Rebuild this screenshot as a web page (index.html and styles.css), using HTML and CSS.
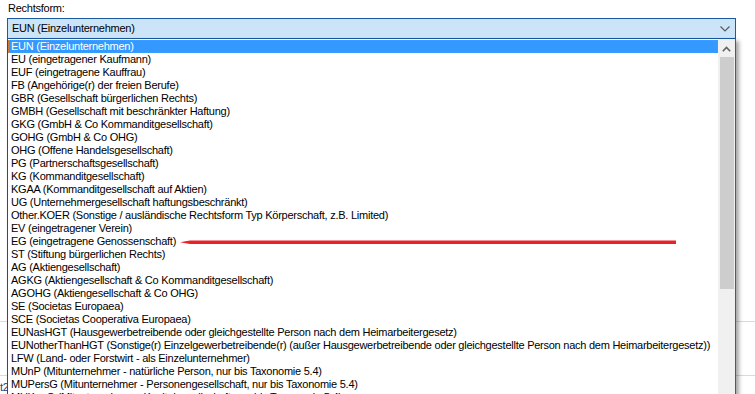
FILE: index.html
```html
<!DOCTYPE html>
<html lang="de">
<head>
<meta charset="utf-8">
<title>Rechtsform</title>
<link rel="stylesheet" href="styles.css">
</head>
<body>
<div class="page">
  <div class="field">
    <div class="lbl">Rechtsform:</div>
    <div class="select">
      <span class="sel-text">EUN (Einzelunternehmen)</span>
      <svg class="chev" width="10" height="6" viewBox="0 0 10 6"><polyline points="0.5,0.5 5,5 9.5,0.5" fill="none" stroke="#5a5a5a" stroke-width="1.2"/></svg>
    </div>
  </div>
  <div class="under">
    <div class="urow"></div>
    <div class="urow"><span class="utext">t2</span></div>
  </div>

  <div class="dropdown">
    <ul class="list">
      <li class="item active">EUN (Einzelunternehmen)</li>
      <li class="item">EU (eingetragener Kaufmann)</li>
      <li class="item">EUF (eingetragene Kauffrau)</li>
      <li class="item">FB (Angehörige(r) der freien Berufe)</li>
      <li class="item">GBR (Gesellschaft bürgerlichen Rechts)</li>
      <li class="item">GMBH (Gesellschaft mit beschränkter Haftung)</li>
      <li class="item">GKG (GmbH &amp; Co Kommanditgesellschaft)</li>
      <li class="item">GOHG (GmbH &amp; Co OHG)</li>
      <li class="item">OHG (Offene Handelsgesellschaft)</li>
      <li class="item">PG (Partnerschaftsgesellschaft)</li>
      <li class="item">KG (Kommanditgesellschaft)</li>
      <li class="item">KGAA (Kommanditgesellschaft auf Aktien)</li>
      <li class="item">UG (Unternehmergesellschaft haftungsbeschränkt)</li>
      <li class="item">Other.KOER (Sonstige / ausländische Rechtsform Typ Körperschaft, z.B. Limited)</li>
      <li class="item">EV (eingetragener Verein)</li>
      <li class="item">EG (eingetragene Genossenschaft)</li>
      <li class="item">ST (Stiftung bürgerlichen Rechts)</li>
      <li class="item">AG (Aktiengesellschaft)</li>
      <li class="item">AGKG (Aktiengesellschaft &amp; Co Kommanditgesellschaft)</li>
      <li class="item">AGOHG (Aktiengesellschaft &amp; Co OHG)</li>
      <li class="item">SE (Societas Europaea)</li>
      <li class="item">SCE (Societas Cooperativa Europaea)</li>
      <li class="item">EUNasHGT (Hausgewerbetreibende oder gleichgestellte Person nach dem Heimarbeitergesetz)</li>
      <li class="item">EUNotherThanHGT (Sonstige(r) Einzelgewerbetreibende(r) (außer Hausgewerbetreibende oder gleichgestellte Person nach dem Heimarbeitergesetz))</li>
      <li class="item">LFW (Land- oder Forstwirt - als Einzelunternehmer)</li>
      <li class="item">MUnP (Mitunternehmer - natürliche Person, nur bis Taxonomie 5.4)</li>
      <li class="item">MUPersG (Mitunternehmer - Personengesellschaft, nur bis Taxonomie 5.4)</li>
      <li class="item">MUKapG (Mitunternehmer - Kapitalgesellschaft, nur bis Taxonomie 5.4)</li>
    </ul>
    <div class="scrollbar">
      <div class="sb-btn">
        <svg width="9" height="6" viewBox="0 0 9 6"><polyline points="0.8,5.2 4.5,1.5 8.2,5.2" fill="none" stroke="#606060" stroke-width="1.6"/></svg>
      </div>
      <div class="sb-thumb"></div>
    </div>
    <svg class="mark" width="496" height="5" viewBox="0 0 496 5"><polygon points="0,2.2 10,0.6 496,0.6 496,4 10,4" fill="#e8222a"/></svg>
  </div>
</div>
</body>
</html>
```

FILE: styles.css
```css
* { box-sizing: border-box; }
html, body { margin: 0; padding: 0; background: #ffffff; }
body {
  font-family: "Liberation Sans", Arial, sans-serif;
  font-size: 11px;
  letter-spacing: -0.25px;
  color: #000000;
  width: 755px;
  height: 394px;
  overflow: hidden;
}
.page { position: relative; width: 755px; height: 394px; }
.field { padding-top: 2px; }
.lbl { line-height: 13px; padding-left: 8px; height: 16px; }
.select {
  margin-left: 7px;
  width: 729px;
  height: 21px;
  border: 1px solid #1b5aa0;
  background: #cce4f7;
  display: flex;
  align-items: center;
  justify-content: space-between;
  padding: 0 4px 0 4px;
}
.sel-text { line-height: 13px; }
.chev { margin-right: 1px; margin-top: 1px; }
.under { margin-top: 282px; }
.urow { height: 54px; border-top: 1px solid #dadada; }
.utext { display: block; padding-top: 5px; color: #1f3f7a; line-height: 13px; }

.dropdown {
  position: absolute;
  left: 7px;
  top: 39px;
  width: 729px;
  height: 420px;
  background: #ffffff;
  border-left: 1px solid #1b4f8f;
  border-right: 1px solid #1e64b4;
  box-shadow: 3px 2px 4px rgba(0, 0, 0, 0.35);
  display: flex;
}
.list {
  list-style: none;
  margin: 0;
  padding: 1px 0 0 0;
  width: 710px;
  flex: none;
}
.item {
  height: 13px;
  line-height: 13px;
  padding-left: 3px;
  white-space: nowrap;
  overflow: hidden;
}
.item.active {
  background: #3399ff;
  color: #ffffff;
  outline: 1px dotted #d27c35;
  outline-offset: -1px;
}
.scrollbar {
  width: 17px;
  flex: none;
  background: #f0f0f0;
  display: flex;
  flex-direction: column;
  padding-top: 1px;
}
.sb-btn {
  height: 17px;
  display: flex;
  align-items: center;
  justify-content: center;
}
.sb-thumb {
  height: 232px;
  margin: 0 1px 0 2px;
  background: #cdcdcd;
}
.mark { position: absolute; left: 172px; top: 201px; }
```
